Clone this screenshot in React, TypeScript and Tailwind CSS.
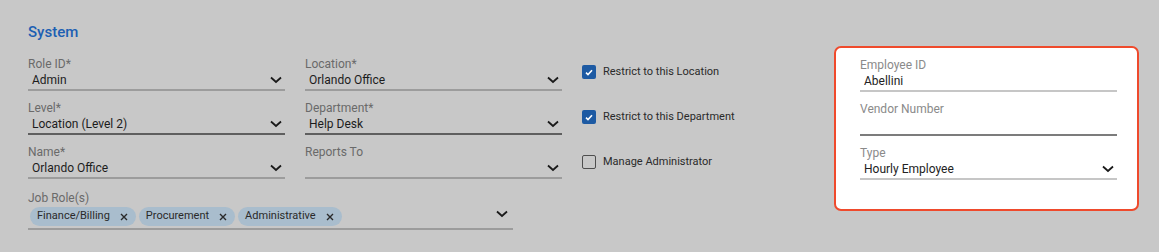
import React from "react";

const Chevron = () => (
  <svg width="12" height="8" viewBox="0 0 12 8" className="shrink-0">
    <polyline points="1,1.5 6,6 11,1.5" fill="none" stroke="#1a1a1a" strokeWidth="1.8" />
  </svg>
);

const XIcon = () => (
  <svg width="8" height="8" viewBox="0 0 8 8" className="shrink-0">
    <path d="M1 1 L7 7 M7 1 L1 7" stroke="#2a2a2a" strokeWidth="1.4" />
  </svg>
);

type FieldProps = {
  label: string;
  value?: string;
  select?: boolean;
  dark?: boolean;
  inBox?: boolean;
};

const Field: React.FC<FieldProps> = ({ label, value, select = true, dark, inBox }) => {
  const line = inBox
    ? dark
      ? "border-[#7c7c7c]"
      : "border-[#c6c6c6]"
    : dark
    ? "border-[#5f5f5f]"
    : "border-[#9c9c9c]";
  return (
    <div className="w-[257px]">
      <div className={`text-[12px] leading-[14px] ${inBox ? "text-[#8a8a8a]" : "text-[#6a6a6a]"}`}>{label}</div>
      <div className={`flex h-[20px] items-center justify-between border-b-2 pl-[4px] pr-[3px] ${line}`}>
        <span className={`text-[12px] ${inBox ? "text-[#222]" : "text-[#1c1c1c]"}`}>{value}</span>
        {select && <Chevron />}
      </div>
    </div>
  );
};

const Check: React.FC<{ label: string; checked?: boolean }> = ({ label, checked }) => (
  <div className="flex h-[34px] items-center gap-[7px]">
    {checked ? (
      <span className="flex h-[14px] w-[14px] items-center justify-center rounded-[2px] bg-[#1d5aa3]">
        <svg width="8" height="7" viewBox="0 0 8 7">
          <polyline points="1,3.6 3,5.5 7,1.2" fill="none" stroke="#fff" strokeWidth="1.6" />
        </svg>
      </span>
    ) : (
      <span className="h-[14px] w-[14px] rounded-[2px] border-[1.5px] border-[#4e4e4e]" />
    )}
    <span className="text-[11px] text-[#2a2a2a]">{label}</span>
  </div>
);

const Chip: React.FC<{ label: string }> = ({ label }) => (
  <span className="flex h-[19px] items-center gap-[10px] rounded-full bg-[#a9bdcd] pl-[7px] pr-[8px] text-[11px] text-[#2a2a2a]">
    {label}
    <XIcon />
  </span>
);

export default function App() {
  return (
    <div
      className="min-h-[252px] w-[1159px] bg-[#c8c8c8] pl-[28px] pt-[22px]"
      style={{ fontFamily: "Roboto, 'Liberation Sans', sans-serif" }}
    >
      <h2 className="text-[15px] font-medium leading-[20px] text-[#1d5fb3]">System</h2>
      <div className="mt-[4px] flex items-start">
        <div className="w-[806px]">
          <div className="flex items-start gap-[20px] pt-[11px]">
            <div className="flex flex-col gap-[10px]">
              <Field label="Role ID*" value="Admin" />
              <Field label="Level*" value="Location (Level 2)" dark />
              <Field label="Name*" value="Orlando Office" />
            </div>
            <div className="flex flex-col gap-[10px]">
              <Field label="Location*" value="Orlando Office" />
              <Field label="Department*" value="Help Desk" dark />
              <Field label="Reports To" value="" />
            </div>
            <div className="-mt-[2px] flex flex-col gap-[11px]">
              <Check label="Restrict to this Location" checked />
              <Check label="Restrict to this Department" checked />
              <Check label="Manage Administrator" />
            </div>
          </div>
          <div className="mt-[12px] w-[485px]">
            <div className="text-[12px] leading-[14px] text-[#6a6a6a]">Job Role(s)</div>
            <div className="flex h-[25px] items-center justify-between border-b-2 border-[#9c9c9c] pl-[2px] pr-[5px]">
              <div className="flex gap-[3px]">
                <Chip label="Finance/Billing" />
                <Chip label="Procurement" />
                <Chip label="Administrative" />
              </div>
              <div className="-mt-[6px]">
                <Chevron />
              </div>
            </div>
          </div>
        </div>
        <div className="flex h-[165px] w-[305px] flex-col gap-[10px] rounded-[7px] border-2 border-[#ef4a2c] bg-white pl-[24px] pt-[10px]">
          <Field label="Employee ID" value="Abellini" select={false} inBox />
          <Field label="Vendor Number" value="" select={false} dark inBox />
          <Field label="Type" value="Hourly Employee" inBox />
        </div>
      </div>
    </div>
  );
}
